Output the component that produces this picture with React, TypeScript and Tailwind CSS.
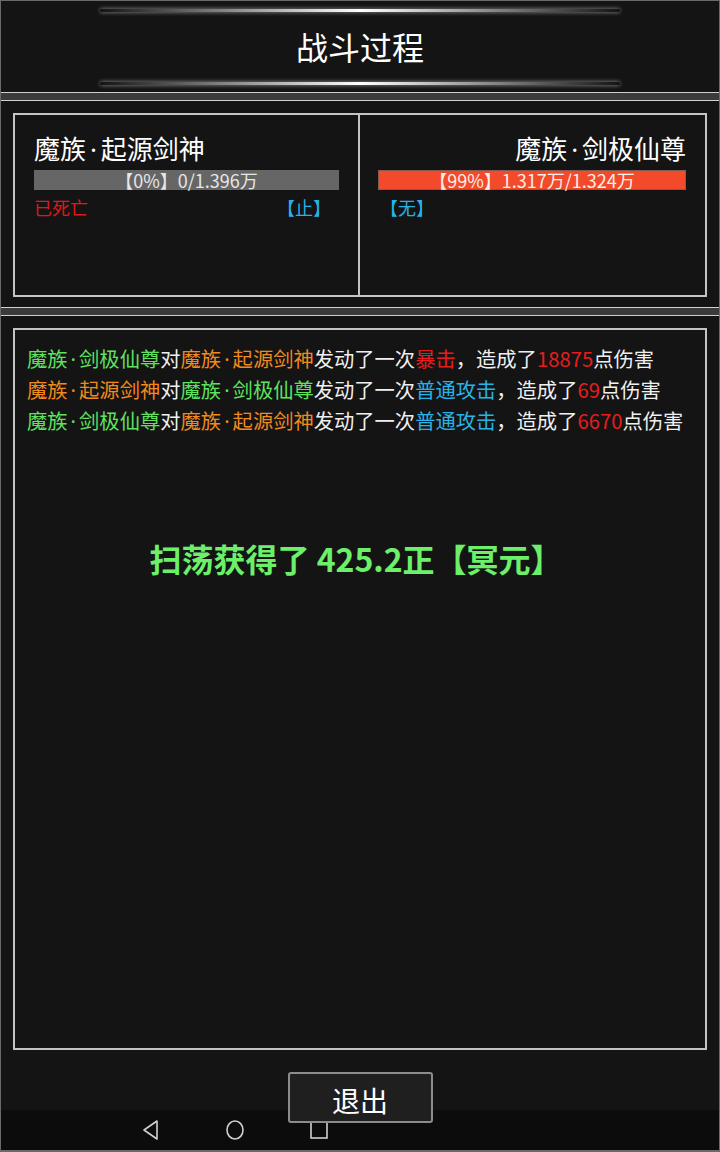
import React from 'react';

const FONT = { fontFamily: '"Noto Sans CJK SC", "Noto Sans", sans-serif' };

type Seg = { t: string; c: string };

const G = 'text-[#5fe35f]';
const O = 'text-[#f08a1e]';
const W = 'text-[#f0f0f0]';
const R = 'text-[#e81c1c]';
const C = 'text-[#27b3e6]';

const LOGS: Seg[][] = [
  [
    { t: '魔族·剑极仙尊', c: G },
    { t: '对', c: W },
    { t: '魔族·起源剑神', c: O },
    { t: '发动了一次', c: W },
    { t: '暴击', c: R },
    { t: '，造成了', c: W },
    { t: '18875', c: R },
    { t: '点伤害', c: W },
  ],
  [
    { t: '魔族·起源剑神', c: O },
    { t: '对', c: W },
    { t: '魔族·剑极仙尊', c: G },
    { t: '发动了一次', c: W },
    { t: '普通攻击', c: C },
    { t: '，造成了', c: W },
    { t: '69', c: R },
    { t: '点伤害', c: W },
  ],
  [
    { t: '魔族·剑极仙尊', c: G },
    { t: '对', c: W },
    { t: '魔族·起源剑神', c: O },
    { t: '发动了一次', c: W },
    { t: '普通攻击', c: C },
    { t: '，造成了', c: W },
    { t: '6670', c: R },
    { t: '点伤害', c: W },
  ],
];

// the middle dot comes out full-width in the CJK font, so set it in a latin face
function Name({ text }: { text: string }) {
  const [a, b] = text.split('·');
  return (
    <>
      {a}
      <span className="px-[0.15em] leading-none" style={{ fontFamily: '"Noto Sans", sans-serif' }}>·</span>
      {b}
    </>
  );
}

function Glow() {
  return (
    <div className="mx-auto w-[520px] h-[3px] rounded-full bg-linear-to-r from-transparent via-white to-transparent shadow-[0_0_4px_rgba(255,255,255,0.6)]" />
  );
}

function Band() {
  return <div className="h-[9px] shrink-0 border-y border-[#cfcfcf] bg-[#3b3b3b]" />;
}

export default function App() {
  return (
    <div
      className="relative w-[720px] h-[1152px] bg-[#141414] border border-[#6a6a6a] flex flex-col overflow-hidden"
      style={FONT}
    >
      {/* header */}
      <header className="h-[91px] shrink-0 flex flex-col pt-[8px] pb-[7px]">
        <Glow />
        <h1 className="flex-1 flex items-center justify-center text-[32px] text-white leading-none pb-[2px]">战斗过程</h1>
        <Glow />
      </header>

      <Band />

      {/* fighters */}
      <section className="shrink-0 px-[12px] pt-[12px] pb-[10px]">
        <div className="h-[184px] border-2 border-[#c4c4c4] grid grid-cols-2">
          <div className="border-r-2 border-[#c4c4c4] pl-[19px] pr-[19px] pt-[16px]">
            <div className="text-[26px] leading-[34px] text-white">
              <Name text="魔族·起源剑神" />
            </div>
            <div className="mt-[5px] h-[20px] bg-[#666666] flex items-center justify-center text-[18px] leading-none text-[#e6e6e6]">
              【0%】0/1.396万
            </div>
            <div className="mt-[6px] flex justify-between text-[18px] leading-[22px]">
              <span className="text-[#e01818]">已死亡</span>
              <span className="text-[#27b3e6] pr-[8px]">【止】</span>
            </div>
          </div>
          <div className="pl-[18px] pr-[19px] pt-[16px]">
            <div className="text-[26px] leading-[34px] text-white text-right">
              <Name text="魔族·剑极仙尊" />
            </div>
            <div className="mt-[5px] h-[20px] bg-[#f24a2a] border border-[#8a5a50] flex items-center justify-center text-[18px] leading-none text-[#fbefe9]">
              【99%】1.317万/1.324万
            </div>
            <div className="mt-[6px] text-[18px] leading-[22px] text-[#27b3e6] pl-[2px]">【无】</div>
          </div>
        </div>
      </section>

      <Band />

      {/* battle log */}
      <section className="flex-1 flex flex-col px-[12px] pt-[12px] relative">
        <div className="h-[722px] border-2 border-[#c4c4c4] px-[12px] pt-[13px]">
          {LOGS.map((line, i) => (
            <div key={i} className="text-[20.3px] leading-[31px] h-[31px] whitespace-nowrap">
              {line.map((s, j) => (
                <span key={j} className={s.c}>
                  {s.t.includes('·') ? <Name text={s.t} /> : s.t}
                </span>
              ))}
            </div>
          ))}
          <div className="mt-[102px] text-center text-[32px] leading-[40px] font-bold text-[#6cf06a] pr-[8px]">
            扫荡获得了 425.2正【冥元】
          </div>
        </div>

        <div className="flex justify-center pt-[22px]">
          <button className="relative z-10 w-[145px] h-[51px] bg-[#1f1f1f] border-2 border-[#8c8c8c] rounded-[3px] text-[28px] leading-none text-white pt-[4px]">
            退出
          </button>
        </div>

        {/* system nav bar */}
        <div className="absolute left-0 right-0 bottom-0 h-[41px] bg-[#0c0c0c] border-b border-[#6a6a6a] flex items-center">
          <div className="flex items-center gap-[64px] ml-[140px]">
            <svg width="20" height="22" viewBox="0 0 20 22" fill="none" stroke="#d0d0d0" strokeWidth="1.6">
              <path d="M16 2 L3 11 L16 20 Z" strokeLinejoin="round" />
            </svg>
            <svg width="20" height="22" viewBox="0 0 20 22" fill="none" stroke="#d0d0d0" strokeWidth="1.6">
              <ellipse cx="10" cy="11" rx="8" ry="9" />
            </svg>
            <svg width="20" height="22" viewBox="0 0 20 22" fill="none" stroke="#d0d0d0" strokeWidth="1.6">
              <rect x="2" y="2" width="16" height="17" />
            </svg>
          </div>
        </div>
      </section>
    </div>
  );
}
